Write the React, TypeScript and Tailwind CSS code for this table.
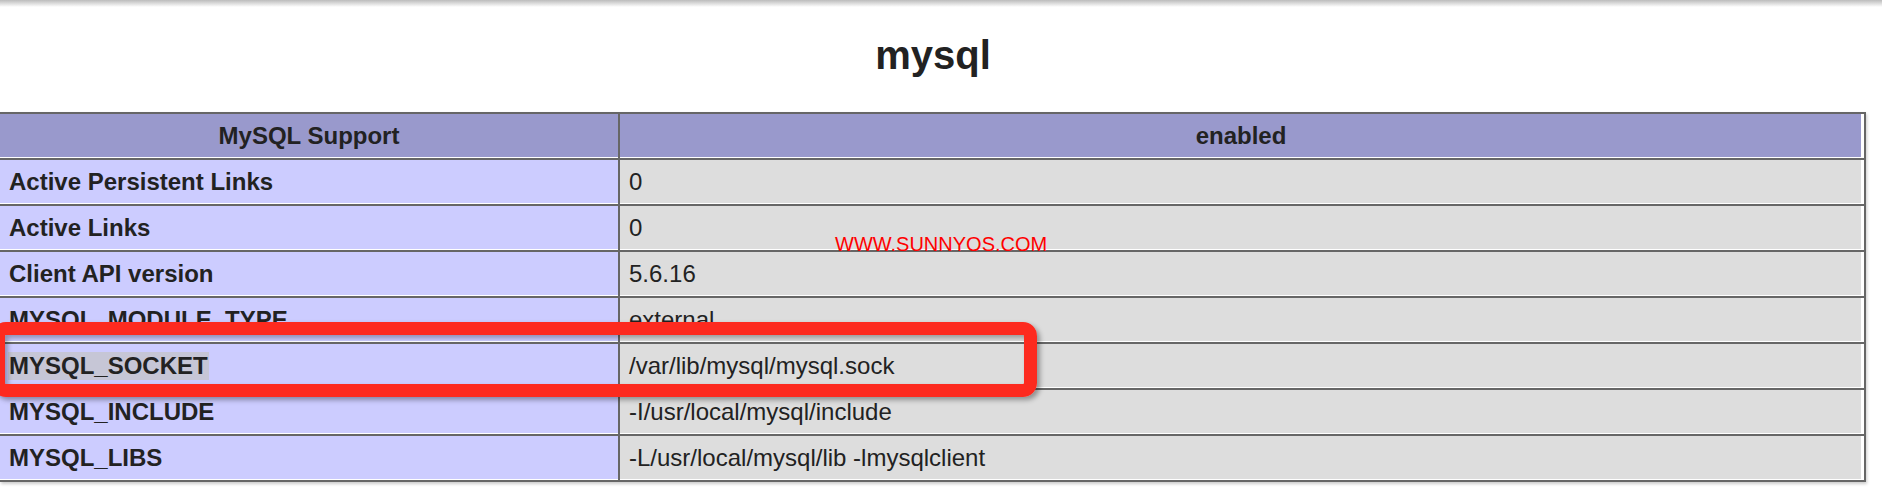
const rows: { label: string; value: string; selected?: boolean }[] = [
  { label: 'Active Persistent Links', value: '0' },
  { label: 'Active Links', value: '0' },
  { label: 'Client API version', value: '5.6.16' },
  { label: 'MYSQL_MODULE_TYPE', value: 'external' },
  { label: 'MYSQL_SOCKET', value: '/var/lib/mysql/mysql.sock', selected: true },
  { label: 'MYSQL_INCLUDE', value: '-I/usr/local/mysql/include' },
  { label: 'MYSQL_LIBS', value: '-L/usr/local/mysql/lib -lmysqlclient' },
];

function Row({ label, value, selected }: { label: string; value: string; selected?: boolean }) {
  return (
    <div className="grid grid-cols-[620px_1242px] border-b-2 border-[#666]">
      <div className="flex h-[44px] items-center border-r-2 border-[#666] bg-[#ccf] pl-[9px] font-bold leading-[28px] shadow-[inset_0_-1px_0_#fff]">
        <span className={selected ? '-ml-[1px] bg-[#c6c6d6] pl-[1px] pr-[1px]' : ''}>{label}</span>
      </div>
      <div className="flex h-[44px] items-center bg-[#ddd] pl-[9px] leading-[28px] shadow-[inset_-1px_-1px_0_#fff]">
        {value}
      </div>
    </div>
  );
}

export default function App() {
  return (
    <div className="relative h-[488px] w-[1882px] overflow-hidden bg-white font-['Liberation_Sans',Arial,sans-serif] text-[24px] text-[#222]">
      <div className="h-[7px] bg-gradient-to-b from-[#bcbcbc] to-white" />

      <div className="w-[1866px]">
        <h1 className="mt-[25px] text-center text-[40px] font-bold leading-[46px]">mysql</h1>

        <div className="mt-[34px] border-t-2 border-r-2 border-[#666] shadow-[1px_2px_3px_#ccc]">
          <div className="grid grid-cols-[620px_1242px] border-b-2 border-[#666]">
            <div className="flex h-[44px] items-center justify-center border-r-2 border-[#666] bg-[#99c] font-bold leading-[28px] shadow-[inset_0_-1px_0_#fff]">
              MySQL Support
            </div>
            <div className="flex h-[44px] items-center justify-center bg-[#99c] font-bold leading-[28px] shadow-[inset_-1px_-1px_0_#fff]">
              enabled
            </div>
          </div>
          {rows.map((r) => (
            <Row key={r.label} label={r.label} value={r.value} selected={r.selected} />
          ))}
        </div>
      </div>

      {/* watermark */}
      <div className="absolute left-[835px] top-[234px] text-[20px] leading-[20px] text-[#f00]">
        WWW.SUNNYOS.COM
      </div>

      {/* red annotation box */}
      <div className="absolute left-[-8px] top-[322px] h-[75px] w-[1045px] rounded-[14px] border-[13px] border-[#fd2a1f] shadow-[3px_3px_5px_rgba(0,0,0,0.35),inset_3px_3px_5px_rgba(0,0,0,0.3)]" />
    </div>
  );
}
